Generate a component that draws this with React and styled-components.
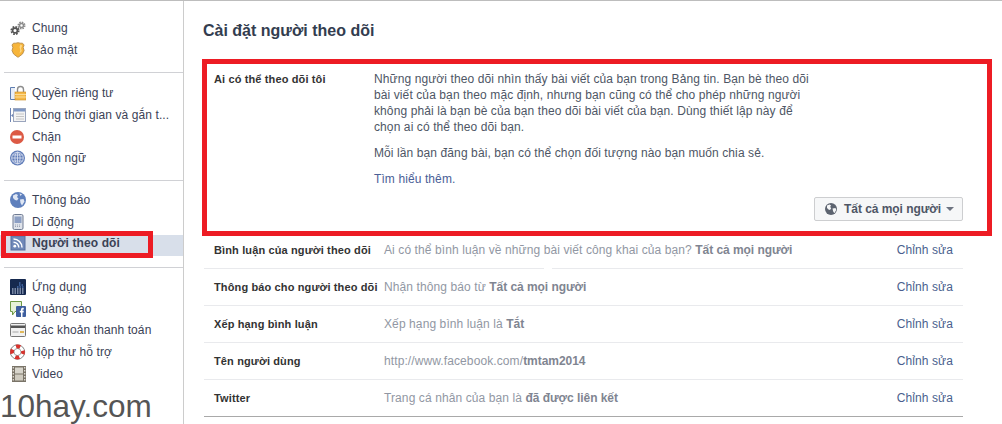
import React from 'react';
import styled, { createGlobalStyle } from 'styled-components';

const GlobalStyle = createGlobalStyle`
  html, body {
    margin: 0;
    padding: 0;
    background: #fff;
    overflow: hidden;
  }
  body {
    font-family: "Liberation Sans", Arial, sans-serif;
    font-size: 12px;
    letter-spacing: 0.1px;
    color: #333;
  }
`;

const Page = styled.div`
  position: relative;
  display: flex;
  width: 1002px;
  height: 424px;
  box-sizing: border-box;
  border-top: 1px solid #bdbdbd;
  overflow: hidden;
`;

const Sidebar = styled.nav`
  width: 183px;
  flex: none;
  box-sizing: content-box;
  border-right: 1px solid #ccc;
  padding-top: 16px;
`;

const NavGroup = styled.ul`
  list-style: none;
  margin: 0 0 0 4px;
  padding: ${(p) => p.$top}px 0 ${(p) => p.$bottom}px;
  border-bottom: ${(p) => (p.$last ? 'none' : '1px solid #d0d1d5')};
`;

const NavItem = styled.li`
  position: relative;
  display: flex;
  align-items: center;
  gap: 6px;
  height: 21.7px;
  margin-left: -4px;
  padding-left: 10px;
  color: #3b4256;
  white-space: nowrap;
  font-weight: ${(p) => (p.$active ? 700 : 400)};
  background: ${(p) => (p.$active ? 'linear-gradient(transparent 2px, #d8dfea 2px)' : 'transparent')};
  box-shadow: ${(p) => (p.$active ? '0 2px 0 #d8dfea' : 'none')};
  & > svg {
    flex: none;
  }
`;

const SideCallout = styled.span`
  position: absolute;
  left: 1px;
  top: -2px;
  width: 152px;
  height: 27px;
  box-sizing: border-box;
  border: 5px solid #ed1c24;
`;

const Watermark = styled.div`
  position: absolute;
  left: 0;
  top: 387px;
  font-size: 31.5px;
  line-height: 36px;
  letter-spacing: 0;
  color: #555;
`;

const Main = styled.main`
  flex: 1;
  padding: 21px 0 0 18px;
  min-width: 0;
`;

const Title = styled.h1`
  margin: 0 0 19px 1px;
  font-size: 16px;
  line-height: 18px;
  font-weight: 700;
  letter-spacing: 0;
  color: #333d4f;
`;

const OpenRow = styled.section`
  display: grid;
  grid-template-columns: 160px 1fr;
  width: 790px;
  height: 177px;
  box-sizing: border-box;
  border: 5px solid #ed1c24;
  padding: 7px 24px 0 7px;
`;

const RowLabel = styled.div`
  font-size: 11px;
  line-height: 16px;
  font-weight: 700;
  letter-spacing: 0.13px;
  color: #333;
  white-space: nowrap;
`;

const OpenBody = styled.div`
  display: flex;
  flex-direction: column;
  line-height: 16px;
  color: #4e5665;
`;

const Para = styled.p`
  margin: 0 0 10px;
  white-space: nowrap;
`;

const LearnMore = styled.a`
  color: #4a6096;
`;

const Audience = styled.button`
  display: inline-flex;
  align-items: center;
  align-self: flex-end;
  gap: 7px;
  height: 24px;
  width: 149px;
  padding: 0 0 0 10px;
  box-sizing: border-box;
  border: 1px solid #cdced0;
  border-radius: 2px;
  background: #f6f7f8;
  font: 700 12px "Liberation Sans", Arial, sans-serif;
  letter-spacing: -0.05px;
  color: #4e5665;
  white-space: nowrap;
`;

const Caret = styled.i`
  width: 0;
  height: 0;
  margin-left: -2px;
  border: 4px solid transparent;
  border-top: 4px solid #6d7380;
  border-bottom: none;
`;

const Rows = styled.div`
  width: 759px;
  margin: -4px 0 0 2px;
  border-bottom: 1px solid #a9a9a9;
`;

const Row = styled.div`
  position: relative;
  display: grid;
  grid-template-columns: 170px 1fr auto;
  align-items: center;
  height: ${(p) => (p.$last ? 36 : 37)}px;
  box-sizing: border-box;
  padding: 0 10px;
  border-bottom: ${(p) => (p.$last ? 'none' : '1px solid #e9eaed')};
`;

const LineGap = styled.span`
  position: absolute;
  left: 340px;
  bottom: -1px;
  width: 8px;
  height: 1px;
  background: #fff;
`;

const RowValue = styled.div`
  color: #9197a3;
  white-space: nowrap;
  b {
    color: #7f8591;
    letter-spacing: -0.05px;
  }
`;

const EditLink = styled.a`
  color: #4a5f8e;
`;

const GearsIcon = () => (
  <svg width="16" height="16" viewBox="0 0 16 16">
    <circle cx="11.500" cy="5.500" r="3.200" fill="none" stroke="#8c8c8c" strokeWidth="1.600" strokeDasharray="1.500 1" />
    <circle cx="11.500" cy="5.500" r="2" fill="none" stroke="#8c8c8c" strokeWidth="1.500" />
    <circle cx="5" cy="10.500" r="3.700" fill="none" stroke="#555" strokeWidth="1.800" strokeDasharray="1.700 1.200" />
    <circle cx="5" cy="10.500" r="2.400" fill="none" stroke="#555" strokeWidth="1.700" />
  </svg>
);

const ShieldIcon = () => (
  <svg width="16" height="16" viewBox="0 0 16 16">
    <path d="M3.500 1.200h2.300L8 .7l2.200.5h2.300l1.600 1.800-.9 2.500.9 3-1.600 3.500L8.500 15h-1l-3.900-3L2 8.500l.9-3L2 3z" fill="#f7b53a" stroke="#b98c48" strokeWidth="0.900" />
    <path d="M10.500 2.500l1.700 1-1.200 3 .8 2.500-2.300 2.500.8-3.500-.8-3z" fill="#fcd98a" />
  </svg>
);

const LockIcon = () => (
  <svg width="16" height="16" viewBox="0 0 16 16">
    <path d="M5 14.500H.5v-12H5" fill="#e8eef8" stroke="#5f7eb0" />
    <path d="M7.500 7V4.500a3 3 0 0 1 6 0V7" fill="none" stroke="#8d8d8d" strokeWidth="1.400" />
    <rect x="5" y="7" width="11" height="8" fill="#f5b94a" stroke="#c98a1e" strokeWidth="0.600" />
    <path d="M5 9.500h11M5 12h11" stroke="#fbdc96" />
  </svg>
);

const TimelineIcon = () => (
  <svg width="16" height="16" viewBox="0 0 16 16">
    <path d="M.5 1v14" stroke="#6d84b4" />
    <path d="M3.500 6.500 1 8.500l2.500 2z" fill="#6d84b4" />
    <rect x="3.500" y="1.500" width="12" height="13" fill="#f3f3f3" stroke="#9aa5bd" />
    <rect x="4" y="2" width="11" height="2.500" fill="#7e97c4" />
    <path d="M6 7h8M6 9.500h8M6 12h8" stroke="#c4c4c4" />
  </svg>
);

const BlockIcon = () => (
  <svg width="16" height="16" viewBox="0 0 16 16">
    <circle cx="7" cy="8" r="7" fill="#dc5a45" />
    <rect x="2.500" y="6.500" width="9" height="3" fill="#fff" />
  </svg>
);

const LanguageIcon = () => (
  <svg width="16" height="16" viewBox="0 0 16 16" fill="none" stroke="#dfe5f2" strokeWidth="0.800">
    <circle cx="7.500" cy="8" r="7.500" fill="#5f7cb8" stroke="none" />
    <circle cx="7.500" cy="8" r="5.800" />
    <ellipse cx="7.500" cy="8" rx="2.600" ry="5.800" />
    <path d="M7.500 2.200v11.600M1.700 8h11.600M2.500 5h10M2.500 11h10" />
  </svg>
);

const EarthIcon = () => (
  <svg width="16" height="16" viewBox="0 0 16 16">
    <circle cx="8" cy="8" r="8" fill="#5f80bd" />
    <path d="M3 3.500l3-1.500 2 1-1 2 1.500 1.500-1.500 2L5 8 3 6zM10 7.500l3.500-.5 1 2.500-2.500 4-1.500-2.500z" fill="#dfe6f3" />
    <path d="M9.500 1.500l2.500.8-1.500 1.700z" fill="#dfe6f3" />
  </svg>
);

const MobileIcon = () => (
  <svg width="16" height="16" viewBox="0 0 16 16">
    <rect x="3" y="0.500" width="10" height="15" rx="1.500" fill="#dfe3ea" stroke="#6f7b93" />
    <rect x="4.500" y="2.500" width="7" height="6.500" fill="#8c9fc4" />
    <path d="M5 11h6M5 12.500h6" stroke="#9aa3b5" strokeDasharray="1 1" />
  </svg>
);

const RssIcon = () => (
  <svg width="16" height="16" viewBox="0 0 16 16">
    <rect x="1" y="1" width="14" height="14" fill="#7088b8" stroke="#566f9f" />
    <circle cx="4.800" cy="11.200" r="1.400" fill="#fff" />
    <path d="M3.500 7.200a5.300 5.300 0 0 1 5.300 5.300M3.500 4a8.500 8.500 0 0 1 8.500 8.500" fill="none" stroke="#fff" strokeWidth="1.500" />
  </svg>
);

const AppsIcon = () => (
  <svg width="16" height="16" viewBox="0 0 16 16">
    <rect width="16" height="16" rx="1" fill="#16294f" />
    <path d="M2 14h12M2 12h12M2 10h12" stroke="#d5e2f7" strokeDasharray="1.500 1" />
    <path d="M7 8h7M9 6h5M9 4h2" stroke="#5f8fdc" strokeWidth="1.200" strokeDasharray="1.500 1" />
  </svg>
);

const AdIcon = () => (
  <svg width="16" height="16" viewBox="0 0 16 16">
    <path d="M.5.500h11v10H5L2.500 14v-3.500h-2z" fill="#e6f1d8" stroke="#6f9a45" />
    <rect x="6" y="5" width="10" height="11" rx="1" fill="#3f5f9f" />
    <path d="M11 16v-4.500H9.800V9.800H11V8.600c0-1.200.7-1.800 1.800-1.800h1v1.700h-.7c-.4 0-.6.2-.6.600v.7h1.300l-.2 1.700h-1.100V16z" fill="#fff" />
  </svg>
);

const CardIcon = () => (
  <svg width="16" height="16" viewBox="0 0 16 16">
    <rect x="0.500" y="1.500" width="15" height="13" rx="1" fill="#f1f1f1" stroke="#777" />
    <rect x="1" y="3.500" width="14" height="2.500" fill="#555" />
    <rect x="2.500" y="9" width="6" height="2" fill="#ccc" />
    <rect x="10" y="9" width="4" height="2" fill="#e0b85a" />
  </svg>
);

const BuoyIcon = () => (
  <svg width="16" height="16" viewBox="0 0 16 16">
    <circle cx="7.500" cy="8" r="5.500" fill="none" stroke="#fff" strokeWidth="3.800" />
    <circle cx="7.500" cy="8" r="7.200" fill="none" stroke="#555" strokeWidth="0.700" />
    <circle cx="7.500" cy="8" r="5.500" fill="none" stroke="#d9322c" strokeWidth="3.800" strokeDasharray="4.300 4.340" strokeDashoffset="2.150" />
    <circle cx="7.500" cy="8" r="3.500" fill="none" stroke="#555" strokeWidth="0.500" />
  </svg>
);

const FilmIcon = () => (
  <svg width="16" height="16" viewBox="0 0 16 16">
    <rect x="2" y="0" width="14" height="16" fill="#7a7468" />
    <rect x="5" y="1.500" width="8" height="6" fill="#d8d5cc" />
    <rect x="5" y="8.500" width="8" height="6" fill="#cfcbc0" />
    <path d="M3.300 1v14.500M14.700 1v14.500" stroke="#e8e5dd" strokeWidth="1.200" strokeDasharray="1.500 1.500" />
  </svg>
);

const GlobeSmall = () => (
  <svg width="12" height="12" viewBox="0 0 12 12">
    <circle cx="6" cy="6" r="6" fill="#5d6470" />
    <path d="M2 2.500l2.500-1 1.500.8-.8 1.700 1 1.200-1.200 1.800-1.500-.5L2 5zM7.500 5.500l3-.5.8 2-2 3.200-1.200-2z" fill="#f6f7f8" />
  </svg>
);

const navGroups = [
  {
    top: 0,
    bottom: 12,
    items: [
      { Icon: GearsIcon, label: 'Chung' },
      { Icon: ShieldIcon, label: 'Bảo mật' },
    ],
  },
  {
    top: 9,
    bottom: 11,
    items: [
      { Icon: LockIcon, label: 'Quyền riêng tư' },
      { Icon: TimelineIcon, label: 'Dòng thời gian và gắn t...' },
      { Icon: BlockIcon, label: 'Chặn' },
      { Icon: LanguageIcon, label: 'Ngôn ngữ' },
    ],
  },
  {
    top: 8,
    bottom: 13,
    items: [
      { Icon: EarthIcon, label: 'Thông báo' },
      { Icon: MobileIcon, label: 'Di động' },
      { Icon: RssIcon, label: 'Người theo dõi', active: true },
    ],
  },
  {
    top: 8,
    bottom: 0,
    last: true,
    items: [
      { Icon: AppsIcon, label: 'Ứng dụng' },
      { Icon: AdIcon, label: 'Quảng cáo' },
      { Icon: CardIcon, label: 'Các khoản thanh toán' },
      { Icon: BuoyIcon, label: 'Hộp thư hỗ trợ' },
      { Icon: FilmIcon, label: 'Video' },
    ],
  },
];

const rows = [
  {
    label: 'Bình luận của người theo dõi',
    value: <>Ai có thể bình luận về những bài viết công khai của bạn? <b>Tất cả mọi người</b></>,
    gap: true,
  },
  { label: 'Thông báo cho người theo dõi', value: <>Nhận thông báo từ <b>Tất cả mọi người</b></> },
  { label: 'Xếp hạng bình luận', value: <>Xếp hạng bình luận là <b>Tắt</b></> },
  { label: 'Tên người dùng', value: <>http://www.facebook.com/<b>tmtam2014</b></> },
  { label: 'Twitter', value: <>Trang cá nhân của bạn là <b>đã được liên kết</b></>, last: true },
];

const App = () => (
  <Page>
    <GlobalStyle />
    <Sidebar>
      {navGroups.map((group) => (
        <NavGroup key={group.items[0].label} $top={group.top} $bottom={group.bottom} $last={group.last}>
          {group.items.map(({ Icon, label, active }) => (
            <NavItem key={label} $active={active}>
              <Icon />
              {label}
              {active && <SideCallout />}
            </NavItem>
          ))}
        </NavGroup>
      ))}
    </Sidebar>
    <Main>
      <Title>Cài đặt người theo dõi</Title>
      <OpenRow>
        <RowLabel>Ai có thể theo dõi tôi</RowLabel>
        <OpenBody>
          <Para>
            Những người theo dõi nhìn thấy bài viết của bạn trong Bảng tin. Bạn bè theo dõi<br />
            bài viết của bạn theo mặc định, nhưng bạn cũng có thể cho phép những người<br />
            không phải là bạn bè của bạn theo dõi bài viết của bạn. Dùng thiết lập này để<br />
            chọn ai có thể theo dõi bạn.
          </Para>
          <Para>Mỗi lần bạn đăng bài, bạn có thể chọn đối tượng nào bạn muốn chia sẻ.</Para>
          <Para><LearnMore>Tìm hiểu thêm.</LearnMore></Para>
          <Audience type="button">
            <GlobeSmall />
            Tất cả mọi người
            <Caret />
          </Audience>
        </OpenBody>
      </OpenRow>
      <Rows>
        {rows.map((row) => (
          <Row key={row.label} $last={row.last}>
            <RowLabel>{row.label}</RowLabel>
            <RowValue>{row.value}</RowValue>
            <EditLink>Chỉnh sửa</EditLink>
            {row.gap && <LineGap />}
          </Row>
        ))}
      </Rows>
    </Main>
    <Watermark>10hay.com</Watermark>
  </Page>
);

export default App;
